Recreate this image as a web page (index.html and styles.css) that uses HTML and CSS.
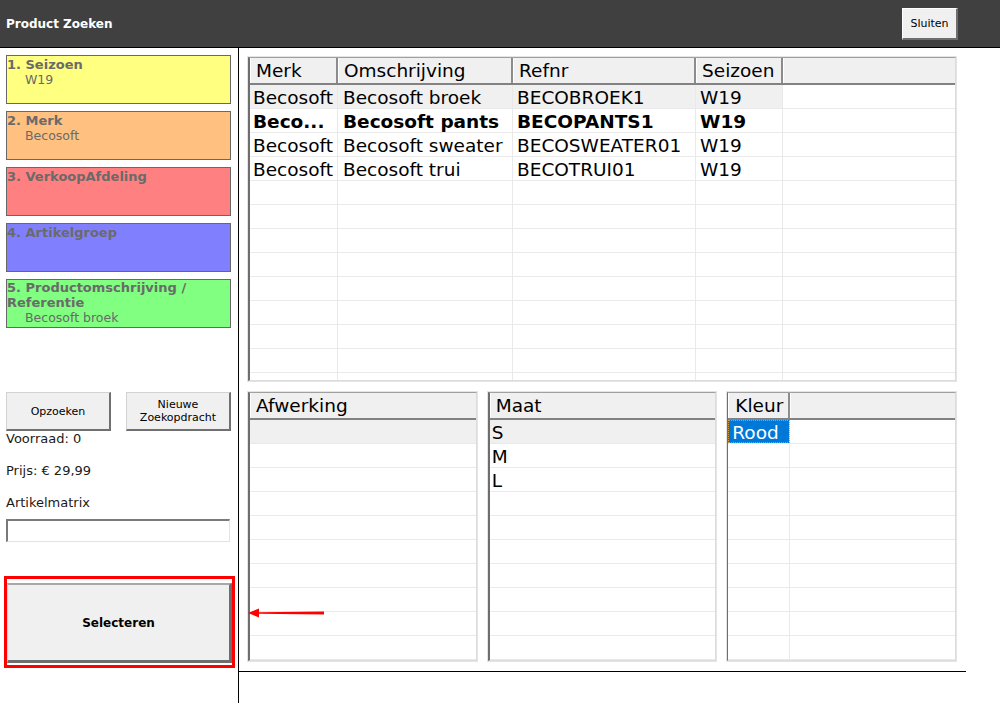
FILE: index.html
```html
<!DOCTYPE html>
<html lang="nl">
<head>
    <meta charset="UTF-8">
    <meta name="viewport" content="width=device-width, initial-scale=1.0">
    <title>Product Zoeken</title>
    <link rel="stylesheet" href="styles.css">
</head>
<body>
    <div class="topbar">
        <div class="title">Product Zoeken</div>
        <button class="btn btn-close">Sluiten</button>
    </div>

    <div class="main">
        <div class="sidebar">
            <div class="steps">
                <div class="step step-season">
                    <div class="step-title">1. Seizoen</div>
                    <div class="step-value">W19</div>
                </div>
                <div class="step step-brand">
                    <div class="step-title">2. Merk</div>
                    <div class="step-value">Becosoft</div>
                </div>
                <div class="step step-dept">
                    <div class="step-title">3. VerkoopAfdeling</div>
                </div>
                <div class="step step-group">
                    <div class="step-title">4. Artikelgroep</div>
                </div>
                <div class="step step-product">
                    <div class="step-title">5. Productomschrijving / Referentie</div>
                    <div class="step-value">Becosoft broek</div>
                </div>
            </div>

            <div class="actions">
                <button class="btn btn-small">Opzoeken</button>
                <button class="btn btn-small">Nieuwe<br>Zoekopdracht</button>
            </div>

            <div class="info">Voorraad: 0</div>
            <div class="info">Prijs: € 29,99</div>
            <div class="info">Artikelmatrix</div>
            <div class="matrix-input"></div>

            <div class="highlight">
                <button class="btn btn-select">Selecteren</button>
            </div>
        </div>

        <div class="content">
            <div class="grid top-grid">
                <div class="grid-body">
                    <div class="grid-head">
                        <div class="hcell">Merk</div>
                        <div class="hcell">Omschrijving</div>
                        <div class="hcell">Refnr</div>
                        <div class="hcell">Seizoen</div>
                        <div class="hcell filler"></div>
                    </div>
                    <div class="row current">
                        <div class="cell">Becosoft</div>
                        <div class="cell">Becosoft broek</div>
                        <div class="cell">BECOBROEK1</div>
                        <div class="cell">W19</div>
                        <div class="cell filler"></div>
                    </div>
                    <div class="row bold">
                        <div class="cell">Beco...</div>
                        <div class="cell">Becosoft pants</div>
                        <div class="cell">BECOPANTS1</div>
                        <div class="cell">W19</div>
                        <div class="cell filler"></div>
                    </div>
                    <div class="row">
                        <div class="cell">Becosoft</div>
                        <div class="cell">Becosoft sweater</div>
                        <div class="cell">BECOSWEATER01</div>
                        <div class="cell">W19</div>
                        <div class="cell filler"></div>
                    </div>
                    <div class="row">
                        <div class="cell">Becosoft</div>
                        <div class="cell">Becosoft trui</div>
                        <div class="cell">BECOTRUI01</div>
                        <div class="cell">W19</div>
                        <div class="cell filler"></div>
                    </div>
                    <div class="row"><div class="cell"></div><div class="cell"></div><div class="cell"></div><div class="cell"></div><div class="cell filler"></div></div>
                    <div class="row"><div class="cell"></div><div class="cell"></div><div class="cell"></div><div class="cell"></div><div class="cell filler"></div></div>
                    <div class="row"><div class="cell"></div><div class="cell"></div><div class="cell"></div><div class="cell"></div><div class="cell filler"></div></div>
                    <div class="row"><div class="cell"></div><div class="cell"></div><div class="cell"></div><div class="cell"></div><div class="cell filler"></div></div>
                    <div class="row"><div class="cell"></div><div class="cell"></div><div class="cell"></div><div class="cell"></div><div class="cell filler"></div></div>
                    <div class="row"><div class="cell"></div><div class="cell"></div><div class="cell"></div><div class="cell"></div><div class="cell filler"></div></div>
                    <div class="row"><div class="cell"></div><div class="cell"></div><div class="cell"></div><div class="cell"></div><div class="cell filler"></div></div>
                    <div class="row"><div class="cell"></div><div class="cell"></div><div class="cell"></div><div class="cell"></div><div class="cell filler"></div></div>
                    <div class="row"><div class="cell"></div><div class="cell"></div><div class="cell"></div><div class="cell"></div><div class="cell filler"></div></div>
                </div>
            </div>

            <div class="bottom">
                <div class="grid single-grid">
                    <div class="grid-body">
                        <div class="grid-head"><div class="hcell">Afwerking</div></div>
                        <div class="row current"><div class="cell"></div></div>
                        <div class="row"><div class="cell"></div></div>
                        <div class="row"><div class="cell"></div></div>
                        <div class="row"><div class="cell"></div></div>
                        <div class="row"><div class="cell"></div></div>
                        <div class="row"><div class="cell"></div></div>
                        <div class="row"><div class="cell"></div></div>
                        <div class="row"><div class="cell"></div></div>
                        <div class="row"><div class="cell"></div></div>
                        <div class="row"><div class="cell"></div></div>
                    </div>
                </div>
                <div class="grid single-grid">
                    <div class="grid-body">
                        <div class="grid-head"><div class="hcell">Maat</div></div>
                        <div class="row current"><div class="cell">S</div></div>
                        <div class="row"><div class="cell">M</div></div>
                        <div class="row"><div class="cell">L</div></div>
                        <div class="row"><div class="cell"></div></div>
                        <div class="row"><div class="cell"></div></div>
                        <div class="row"><div class="cell"></div></div>
                        <div class="row"><div class="cell"></div></div>
                        <div class="row"><div class="cell"></div></div>
                        <div class="row"><div class="cell"></div></div>
                        <div class="row"><div class="cell"></div></div>
                    </div>
                </div>
                <div class="grid color-grid">
                    <div class="grid-body">
                        <div class="grid-head"><div class="hcell">Kleur</div><div class="hcell filler"></div></div>
                        <div class="row"><div class="cell selected">Rood</div><div class="cell filler"></div></div>
                        <div class="row"><div class="cell"></div><div class="cell filler"></div></div>
                        <div class="row"><div class="cell"></div><div class="cell filler"></div></div>
                        <div class="row"><div class="cell"></div><div class="cell filler"></div></div>
                        <div class="row"><div class="cell"></div><div class="cell filler"></div></div>
                        <div class="row"><div class="cell"></div><div class="cell filler"></div></div>
                        <div class="row"><div class="cell"></div><div class="cell filler"></div></div>
                        <div class="row"><div class="cell"></div><div class="cell filler"></div></div>
                        <div class="row"><div class="cell"></div><div class="cell filler"></div></div>
                        <div class="row"><div class="cell"></div><div class="cell filler"></div></div>
                    </div>
                </div>
            </div>
        </div>
    </div>

    <!-- annotatie-pijl naar de knop -->
    <svg class="arrow" width="80" height="14" viewBox="0 0 80 14">
        <path d="M9 6.2 L76 5.6 L76 8.4 L9 7.8 Z" fill="#ff0000"/>
        <path d="M0 7 L11 2.5 L11 11.5 Z" fill="#ff0000"/>
    </svg>
</body>
</html>
```

FILE: styles.css
```css
body {
    margin: 0;
    width: 1000px;
    height: 703px;
    overflow: hidden;
    position: relative;
    font-family: 'DejaVu Sans', Verdana, sans-serif;
    background-color: #ffffff;
    color: #000000;
}

.topbar {
    height: 47px;
    background-color: #404040;
    border-bottom: 1px solid #000000;
    display: flex;
    align-items: center;
    justify-content: space-between;
    padding: 0 42px 0 6px;
}

.title {
    color: #ffffff;
    font-size: 12px;
    font-weight: bold;
}

.btn {
    font-family: 'DejaVu Sans', Verdana, sans-serif;
    background-color: #f0f0f0;
    color: #000000;
    border-style: solid;
    padding: 0;
    cursor: pointer;
}

.btn-close {
    width: 56px;
    height: 32px;
    font-size: 11px;
    border-width: 1px 2px 2px 1px;
    border-color: #ffffff #6e6e6e #6e6e6e #ffffff;
}

.main {
    display: flex;
    height: 655px;
}

.sidebar {
    width: 238px;
    border-right: 1px solid #000000;
    padding-top: 7px;
    box-sizing: content-box;
}

.steps {
    display: flex;
    flex-direction: column;
    gap: 7px;
}

.step {
    margin-left: 6px;
    width: 225px;
    height: 49px;
    box-sizing: border-box;
    border: 1px solid #686868;
    padding-top: 1px;
    color: #6a6a6a;
}

.step-season { background-color: #ffff80; }
.step-brand { background-color: #ffc080; }
.step-dept { background-color: #ff8080; }
.step-group { background-color: #8080ff; }
.step-product { background-color: #80ff80; }

.step-title {
    font-size: 13px;
    font-weight: bold;
    line-height: 15px;
}

.step-product .step-title {
    line-height: 14.5px;
}

.step-value {
    padding-left: 18px;
    font-size: 12.5px;
    line-height: 15px;
}

.actions {
    display: flex;
    justify-content: space-between;
    margin: 64px 7px 0 6px;
}

.btn-small {
    width: 105px;
    height: 39px;
    font-size: 11px;
    line-height: 13px;
    border-width: 1px 2px 2px 1px;
    border-color: #d2d2d2 #707070 #707070 #d2d2d2;
}

.info {
    padding-left: 6px;
    font-size: 13px;
    line-height: 16px;
    color: #1a1a1a;
    margin-bottom: 16px;
}

.info:nth-of-type(5) {
    margin-bottom: 8px;
}

.matrix-input {
    margin-left: 6px;
    width: 224px;
    height: 23px;
    box-sizing: border-box;
    border-style: solid;
    border-width: 2px 1px 1px 2px;
    border-color: #7a7a7a #e3e3e3 #e3e3e3 #7a7a7a;
    background-color: #ffffff;
}

.highlight {
    margin: 34px 0 0 4px;
    width: 231px;
    height: 92px;
    box-sizing: border-box;
    border: 3px solid #ff0000;
    padding: 4px 0 2px 0;
}

.btn-select {
    width: 225px;
    height: 80px;
    font-size: 12px;
    font-weight: bold;
    border-width: 2px 3px 3px 1px;
    border-color: #a8a8a8 #6e6e6e #6e6e6e #d8d8d8;
}

.content {
    width: 727px;
    height: 624px;
    box-sizing: border-box;
    border-bottom: 1px solid #000000;
    padding: 8px 9px 9px 8px;
}

.grid {
    border: 1px solid #e4e4e4;
    box-sizing: border-box;
}

.top-grid {
    height: 326px;
}

.grid-body {
    height: 100%;
    box-sizing: border-box;
    overflow: hidden;
    border-style: solid;
    border-width: 1px 1px 1px 2px;
    border-color: #a0a0a0 #dcdcdc #dcdcdc #6e6e6e;
}

.grid-head {
    display: grid;
    height: 27px;
    box-sizing: border-box;
    background-color: #f0f0f0;
    border-bottom: 2px solid #828282;
}

.hcell {
    font-size: 18.5px;
    line-height: 26px;
    padding-left: 5px;
    white-space: nowrap;
    overflow: hidden;
    border-right: 2px solid #8c8c8c;
    border-left: 1px solid #ffffff;
}

.hcell.filler {
    border-right: none;
}

.row {
    display: grid;
    height: 24px;
    box-sizing: border-box;
    border-bottom: 1px solid #e9e9e9;
}

.cell {
    font-size: 18.5px;
    line-height: 25px;
    padding: 0 3px 0 4px;
    white-space: nowrap;
    overflow: hidden;
    border-right: 1px solid #e9e9e9;
}

.row.bold .cell {
    font-weight: bold;
}

.row.current .cell {
    background-color: #f0f0f0;
}

.row.current .cell.filler {
    background-color: #ffffff;
}

.top-grid .grid-head,
.top-grid .row {
    grid-template-columns: 88px 175px 183px 87px 1fr;
}

.top-grid .cell:first-child {
    padding-left: 3px;
}

.top-grid .cell:nth-child(2) {
    padding-left: 5px;
}

.cell.filler {
    border-right: none;
}

.bottom {
    display: flex;
    gap: 9px;
    margin-top: 9px;
    height: 271px;
}

.bottom .grid {
    flex: 1;
}

.single-grid .grid-head,
.single-grid .row {
    grid-template-columns: 1fr;
}

.single-grid .hcell,
.single-grid .cell {
    border-right: none;
}

.single-grid .cell {
    padding-left: 2px;
}

.color-grid .grid-body {
    border-left-width: 1px;
}

.color-grid .grid-head,
.color-grid .row {
    grid-template-columns: 62px 1fr;
}

.color-grid .hcell:first-child {
    padding-left: 6px;
}

.cell.selected {
    background-color: #0078d7;
    color: #ffffff;
    outline: 1px dotted #d89a3c;
    outline-offset: -1px;
}

.arrow {
    position: absolute;
    left: 248px;
    top: 606px;
}
```
